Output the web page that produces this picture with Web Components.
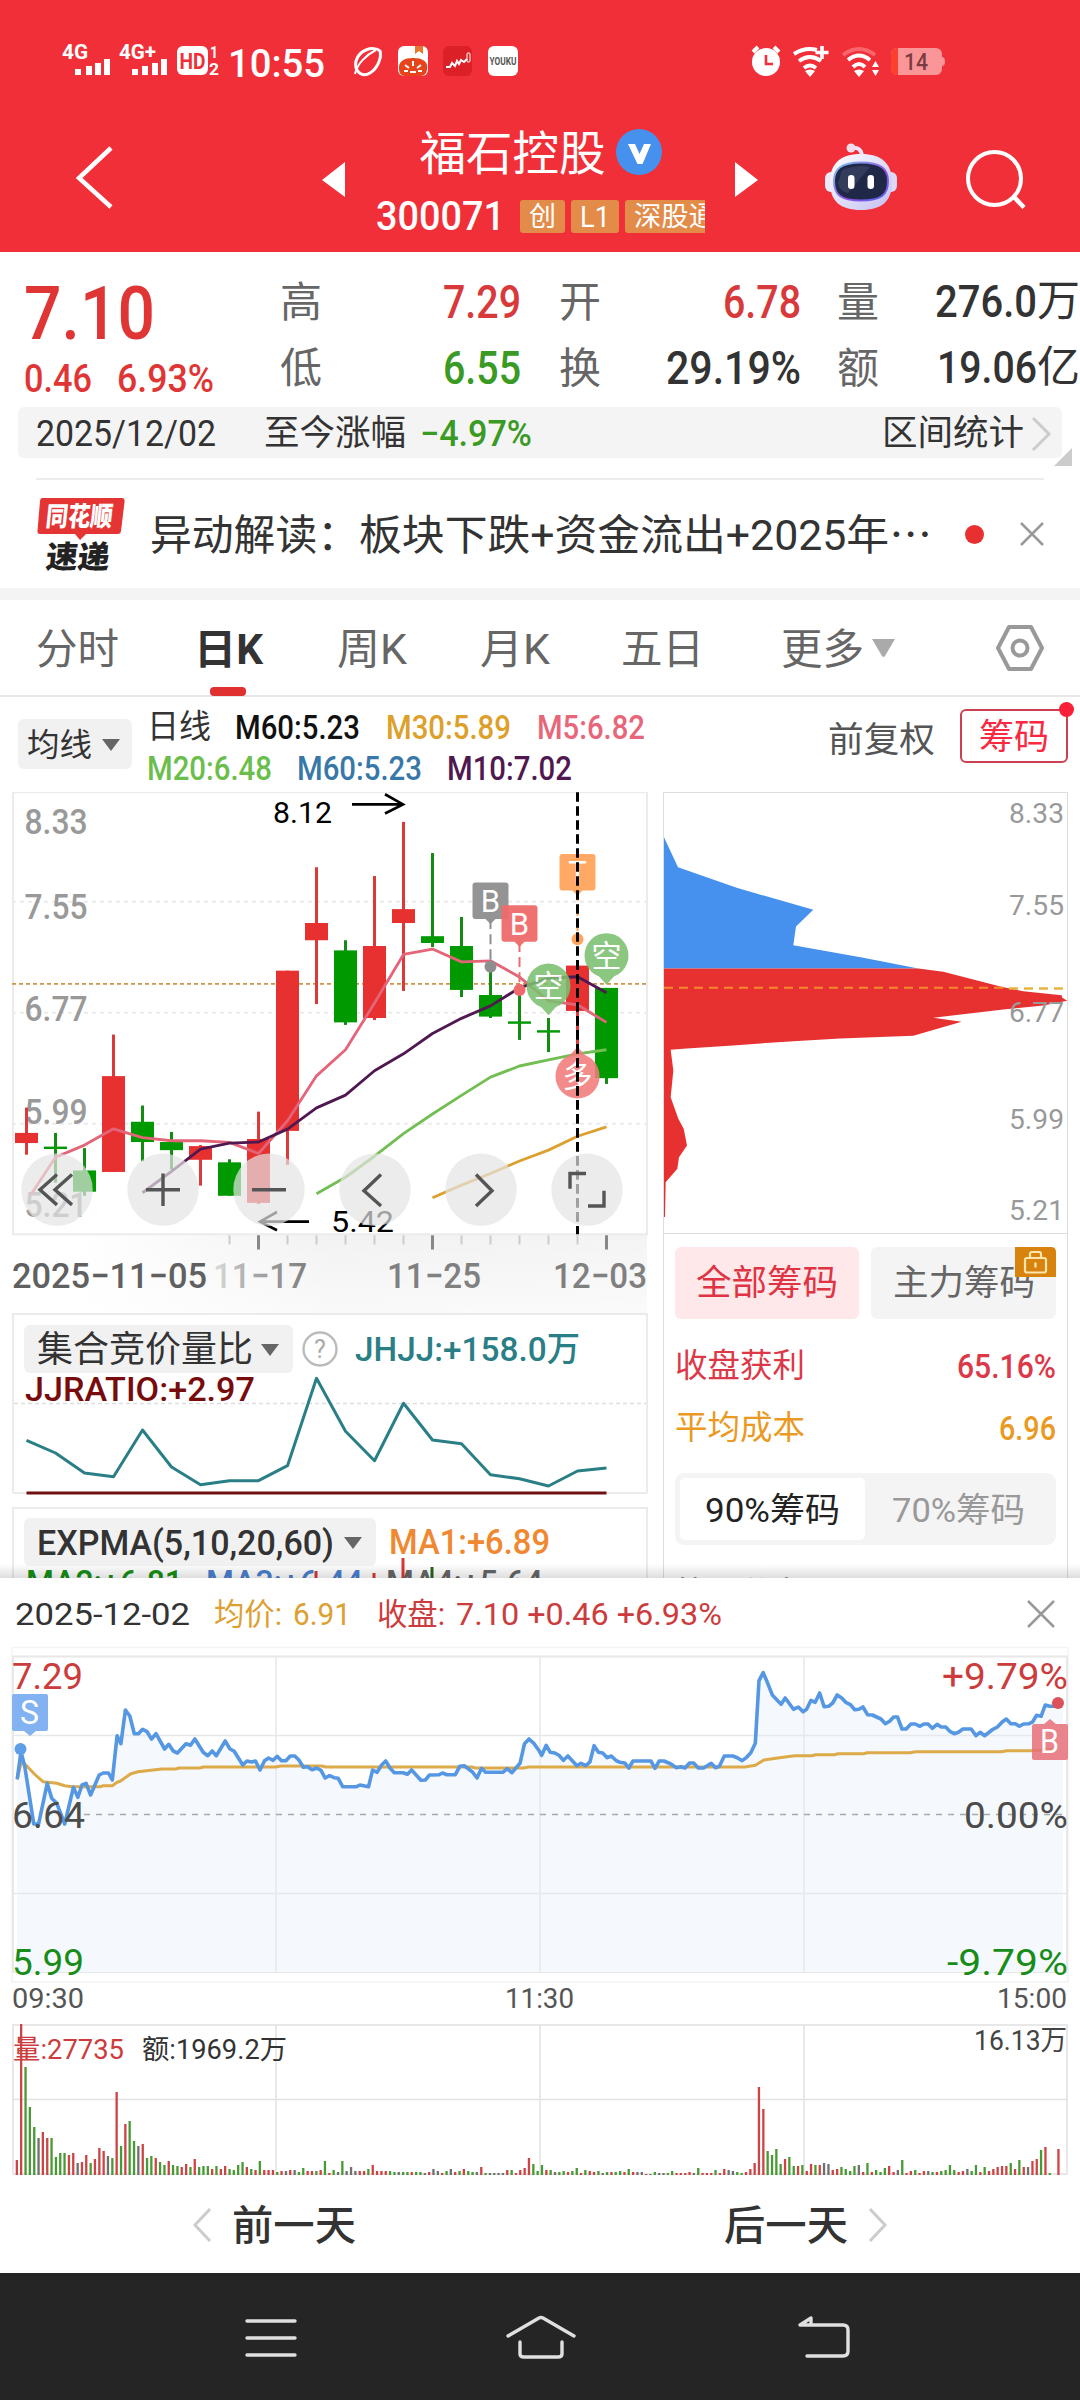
<!DOCTYPE html>
<html lang="zh-CN">
<head>
<meta charset="utf-8">
<title>福石控股 300071</title>
<style>
  body {
    margin: 0;
    width: 1080px;
    height: 2400px;
    overflow: hidden;
    background: #fff;
    color: #333;
    font-family: Roboto, "Noto Sans CJK SC", sans-serif;
  }
  stock-app { height: 2400px; }
</style>
</head>
<body>
<stock-app></stock-app>

<script>
// Registers an element whose shadow root is filled with fixed markup
function define(name, html) {
  const template = document.createElement('template');
  template.innerHTML = html;
  customElements.define(name, class extends HTMLElement {
    constructor() {
      super();
      this.attachShadow({ mode: 'open' });
      this.shadowRoot.appendChild(template.content.cloneNode(true));
    }
  });
}

// SVG label, stretched to width w
function label(text, x, y, size, w, fill, extra = '') {
  return `<text x="${x}" y="${y}" font-size="${size}" textLength="${w}" lengthAdjust="spacingAndGlyphs" fill="${fill}" ${extra}>${text}</text>`;
}

function polyline(points, color, width) {
  return `<polyline points="${points}" fill="none" stroke="${color}" stroke-width="${width}" stroke-linejoin="round"/>`;
}

/* ---------- page ---------- */
define('stock-app', `
<style>
  :host { display: flex; flex-direction: column; }
  header { background: #f02f38; height: 252px; }
  .view { height: 978px; overflow: hidden; position: relative; }
  .view::after {
    content: ''; position: absolute; left: 0; right: 0; bottom: 0; height: 14px;
    background: linear-gradient(rgba(0,0,0,0), rgba(0,0,0,.13));
  }
  .band { height: 12px; background: #f4f4f4; }
  .charts { display: grid; grid-template-columns: 663px 405px; align-items: start; }
</style>
<header><status-bar></status-bar><stock-nav></stock-nav></header>
<quote-panel></quote-panel>
<news-strip></news-strip>
<div class="band"></div>
<div class="view">
  <period-tabs></period-tabs>
  <ma-legend></ma-legend>
  <div class="charts">
    <div><kline-chart></kline-chart><auction-panel></auction-panel><expma-panel></expma-panel></div>
    <chip-panel></chip-panel>
  </div>
</div>
<day-sheet></day-sheet>
<system-nav></system-nav>
`);

/* ---------- header ---------- */
define('status-bar', `
<style>
  :host { display: flex; height: 122px; color: #fff; }
  svg { display: block; }
  text { font-weight: 700; }
</style>
<svg width="1080" height="122" fill="#fff">
  ${label('4G', 62, 58.5, 20.5, 26, '#fff')}
  <path d="M75 69h6v6h-6zM86 66h6v9h-6zM95 63h6v12h-6zM104 59h6v16h-6z"/>
  ${label('4G+', 119, 58.5, 20.5, 37, '#fff')}
  <path d="M132 69h6v6h-6zM142 66h6v9h-6zM152 63h6v12h-6zM161 59h6v16h-6z"/>
  <rect x="177" y="46" width="31" height="29" rx="6"/>
  ${label('HD', 179.5, 68.5, 22, 26, '#f02f38')}
  ${label('1', 210, 58, 17, 8, '#fff')}
  ${label('2', 209, 75, 16, 10, '#fff')}
  ${label('10:55', 228, 76.5, 38, 97, '#fff', 'style="font-weight:500"')}
  <g fill="none" stroke="#fff" stroke-width="3">
    <path d="M357 70C353 63 358 53 366 50C371 48 377 48 380 51C382 58 377 69 370 73C365 76 360 75 357 70Z"/>
    <path d="M355 74C357 64 366 55 376 50" stroke-width="2"/>
  </g>
  <rect x="398" y="46" width="30" height="30" rx="6"/>
  <path d="M415 46h8v8l-4-3-4 3z" fill="#e8762c"/>
  <path d="M399 70C398 61 404 58 413 58S429 61 427 70Q426 76 420 76H405Q400 76 399 70Z" fill="#e8441c"/>
  <path d="M405 65l4 3M413 61v5M421 65l-4 3M404 71h4M418 71h4M410 72h6" stroke="#fff" stroke-width="2" fill="none"/>
  <rect x="443" y="46" width="29" height="30" rx="6" fill="#dc2028"/>
  <path d="M446 67h4l2-4 3 3 2-5 2 3 2-4 3 2 3-3" stroke="#fff" stroke-width="2" fill="none"/>
  <rect x="467" y="53" width="3" height="9" rx="1" fill="none" stroke="#fff"/>
  <rect x="488" y="46" width="30" height="30" rx="6"/>
  ${label('YOUKU', 489.5, 64.5, 10, 27, '#555')}
  <circle cx="766" cy="62" r="14"/>
  <path d="M753 52l5-5M779 52l-5-5" stroke="#fff" stroke-width="4"/>
  <path d="M766 55v9h7" fill="none" stroke="#f02f38" stroke-width="2.6"/>
  <g fill="none" stroke="#fff" stroke-width="4">
    <path d="M794 54Q805 47 817 50M799 61Q810 53 821 61M804 68Q810 63 816 68"/>
    <path d="M822 46v13M815.500 52.500h13" stroke-width="3.600"/>
    <path d="M843 55Q859 43 875 55" stroke="#fa646c"/>
    <path d="M848 60Q859 51 870 60M853 67Q859 61 865 67"/>
  </g>
  <path d="M805 71q5-3 10 0l-5 6zM854 71q5-3 10 0l-5 6zM872 67l3.500-6 3.500 6zM872 70l3.500 6 3.500-6z"/>
  <rect x="891" y="48" width="51" height="27" rx="6" fill="#fa9698"/>
  <path d="M898 48h-1q-6 0-6 6v15q0 6 6 6h1z" fill="#fb4030"/>
  <path d="M942 57q3 0 3 4.500t-3 4.500z" fill="#fa9698"/>
  ${label('14', 904, 70, 23, 24, '#7a3c40', 'style="font-weight:500"')}
</svg>
`);

define('stock-nav', `
<style>
  :host { display: grid; grid-template-columns: 322px 23px 31px 329px 30px 345px; height: 130px; color: #fff; }
  svg { display: block; }
  .title { display: flex; flex-direction: column; align-items: center; }
  .name { display: flex; align-items: center; gap: 10px; height: 60px; }
  .name fit-text { margin-top: 4px; }
  .badge { width: 46px; height: 46px; }
  .code { display: flex; align-items: center; width: 329px; height: 34px; margin-top: 17px; overflow: hidden; }
  .tag { background: #e38b49; border-radius: 3px; height: 33px; margin-left: 6px; padding: 2px 9px 0; box-sizing: border-box; display: flex; align-items: center; flex: none; }
  .tag:nth-of-type(1) { margin-left: 15px; }
</style>
<svg width="322" height="130"><path d="M111 26L79 56L111 85" fill="none" stroke="#fff" stroke-width="4.500"/></svg>
<svg width="23" height="130"><path d="M0 58L23 40V75Z" fill="#fff"/></svg>
<span></span>
<div class="title">
  <div class="name">
    <fit-text w="186" size="46.500">福石控股</fit-text>
    <svg class="badge" viewBox="0 0 46 46"><circle cx="23" cy="23" r="23" fill="#4691ee"/><path d="M12 15h7l4.500 10L28 15h7l-8.500 20h-5z" fill="#fff"/></svg>
  </div>
  <div class="code">
    <fit-text w="129" size="40" weight="500" style="margin-top:2px">300071</fit-text>
    <div class="tag"><fit-text w="27" size="27">创</fit-text></div>
    <div class="tag"><fit-text w="30" size="29">L1</fit-text></div>
    <div class="tag"><fit-text w="82" size="27.500">深股通</fit-text></div>
  </div>
</div>
<span></span>
<svg width="345" height="130">
  <defs>
    <linearGradient id="head" x1="0" y1="0" x2="1" y2="1"><stop offset="0" stop-color="#fff"/><stop offset="1" stop-color="#c4bff2"/></linearGradient>
    <linearGradient id="rim" x1="0" y1="0" x2="1" y2="1"><stop offset="0" stop-color="#7cc8f0"/><stop offset=".6" stop-color="#9050e0"/><stop offset="1" stop-color="#5068f0"/></linearGradient>
  </defs>
  <path d="M0 40V75L23 58Z" fill="#fff"/>
  <g transform="translate(-735 -122)">
    <path d="M851 148q10-2 11 8" fill="none" stroke="#f0e4f8" stroke-width="4"/>
    <circle cx="851" cy="148" r="4.500" fill="#f4dcec"/>
    <rect x="825" y="172" width="14" height="20" rx="6" fill="#ece8fa"/>
    <rect x="883" y="172" width="14" height="20" rx="6" fill="#dcd8f6"/>
    <path d="M861 154C882 154 892 164 892 182C892 201 882 210 861 210S830 201 830 182C830 164 840 154 861 154Z" fill="url(#head)"/>
    <path d="M861 162.500C881 162.500 888 169 888 181C888 195 881 200.500 861 200.500S834 195 834 181C834 169 841 162.500 861 162.500Z" fill="#202848" stroke="url(#rim)" stroke-width="2"/>
    <path d="M842 170q16-6 28-3l-22 26q-9-2-10-10z" fill="#46506c" opacity=".5"/>
    <rect x="848" y="175" width="6.500" height="14" rx="3.200" fill="#fff"/>
    <rect x="867.500" y="175" width="6.500" height="14" rx="3.200" fill="#fff"/>
    <circle cx="994.500" cy="178.500" r="26.500" fill="none" stroke="#fff" stroke-width="4"/>
    <path d="M1014 197l10 10.500" stroke="#fff" stroke-width="4.500"/>
  </g>
</svg>
`);

/* ---------- quote ---------- */
define('quote-panel', `
<style>
  :host { display: flex; flex-direction: column; height: 228px; position: relative; }
  .top { display: grid; grid-template-columns: 280px 241px 280px 279px; height: 156px; color: #666; }
  .price { padding: 24px 0 0 24px; color: #e03535; }
  .sub { display: flex; gap: 25px; margin-top: 9px; }
  .col { display: flex; flex-direction: column; padding-top: 18px; gap: 1px; }
  .cell { display: flex; justify-content: space-between; align-items: center; height: 65px; }
  .cell > :last-child { position: relative; top: -1px; }
  .c2 { padding-left: 38px; } .c3 { padding-left: 36px; }
  .up { color: #d83a3c; } .down { color: #399a24; } .dark { color: #333; }
  .range { display: flex; align-items: center; margin-left: 18px; width: 1044px; height: 51px; box-sizing: border-box; padding: 2px 9px 0 18px; background: #f4f4f4; border-radius: 6px; color: #333; }
  .corner { position: absolute; left: 1054px; top: 196px; }
  hr { width: 1008px; margin: 20px 36px 0; border: 0; border-top: 2px solid #ececec; }
</style>
<div class="top">
  <div class="price">
    <fit-text w="131" size="75" weight="500">7.10</fit-text>
    <div class="sub"><fit-text w="68" size="39" weight="500">0.46</fit-text><fit-text w="97" size="39" weight="500">6.93%</fit-text></div>
  </div>
  <div class="col">
    <div class="cell"><fit-text w="42" size="42">高</fit-text><fit-text class="up" w="78" size="46" weight="500">7.29</fit-text></div>
    <div class="cell"><fit-text w="42" size="42">低</fit-text><fit-text class="down" w="78" size="46" weight="500">6.55</fit-text></div>
  </div>
  <div class="col c2">
    <div class="cell"><fit-text w="42" size="42">开</fit-text><fit-text class="up" w="78" size="46" weight="500">6.78</fit-text></div>
    <div class="cell"><fit-text w="42" size="42">换</fit-text><fit-text class="dark" w="135" size="46" weight="500">29.19%</fit-text></div>
  </div>
  <div class="col c3">
    <div class="cell"><fit-text w="42" size="42">量</fit-text><span class="dark"><fit-text w="102" size="45" weight="500">276.0</fit-text><fit-text w="43" size="43">万</fit-text></span></div>
    <div class="cell"><fit-text w="42" size="42">额</fit-text><span class="dark"><fit-text w="100" size="45" weight="500">19.06</fit-text><fit-text w="43" size="43">亿</fit-text></span></div>
  </div>
</div>
<div class="range">
  <fit-text w="180" size="37">2025/12/02</fit-text>
  <fit-text w="142" size="35.500" style="margin-left:48px">至今涨幅</fit-text>
  <fit-text class="down" w="112" size="36" weight="500" style="margin-left:14px">−4.97%</fit-text>
  <fit-text w="142" size="35.500" style="margin-left:auto">区间统计</fit-text>
  <svg width="22" height="36" style="margin-left:7px"><path d="M2 2L18 18L2 34" fill="none" stroke="#ccc" stroke-width="3"/></svg>
</div>
<svg class="corner" width="18" height="18"><path d="M18 0V18H0Z" fill="#ccc"/></svg>
<hr>
`);

define('news-strip', `
<style>
  :host { display: flex; align-items: center; height: 108px; box-sizing: border-box; padding-left: 36px; }
  .logo { display: flex; flex-direction: column; width: 90px; height: 75px; margin-right: 24px; position: relative; }
  .logo svg { position: absolute; left: 0; top: 0; }
  .logo fit-text { position: relative; transform: skewX(-6deg); }
  .a { color: #fff; margin: 7px 0 0 10px; }
  .b { color: #222; margin: 11px 0 0 10px; }
  .t { margin-top: 4px; }
  .dot { width: 19px; height: 19px; border-radius: 50%; background: #e83030; margin: 0 44px 0 33px; }
</style>
<div class="logo">
  <svg width="90" height="45"><path d="M6 1H86Q89 1 88.500 5L85 34Q84.500 37 82 37H50L44 43L39 37H4Q1 37 1.500 34L4 4Q4.500 1 6 1Z" fill="#e53434"/></svg>
  <fit-text class="a" w="69" size="27" weight="900">同花顺</fit-text>
  <fit-text class="b" w="67" size="31" weight="900">速递</fit-text>
</div>
<fit-text class="t" w="209" size="42">异动解读：</fit-text>
<fit-text class="t" w="573" size="42">板块下跌+资金流出+2025年⋯</fit-text>
<div class="dot" style="margin-left:33px;margin-right:35px"></div>
<svg width="26" height="26"><path d="M2 2L24 24M24 2L2 24" stroke="#999" stroke-width="2.500"/></svg>
`);

/* ---------- tabs ---------- */
define('period-tabs', `
<style>
  :host { display: flex; height: 97px; border-bottom: 2px solid #e8e8e8; color: #666; box-sizing: border-box; padding-left: 36px; }
  div { display: flex; align-items: center; height: 96px; position: relative; margin-right: 59px; }
  fit-text { margin-top: 4px; }
  .on { color: #333; }
  .on::after { content: ''; position: absolute; left: 16px; bottom: 0; width: 36px; height: 9px; border-radius: 4px; background: #e03030; }
</style>
<div style="margin-right:75px"><fit-text w="83" size="41.500">分时</fit-text></div>
<div class="on" style="margin-right:74px"><fit-text w="69" size="42" weight="700">日K</fit-text></div>
<div style="margin-right:73px"><fit-text w="70" size="42">周K</fit-text></div>
<div style="margin-right:71px"><fit-text w="70" size="42">月K</fit-text></div>
<div style="margin-right:77px"><fit-text w="83" size="41.500">五日</fit-text></div>
<div style="margin-right:8px"><fit-text w="83" size="41.500">更多</fit-text></div>
<div style="margin-right:100px"><svg width="23" height="20"><path d="M0 1H23L13 18Q11.500 20 10 18Z" fill="#aaa"/></svg></div>
<div><svg width="50" height="48" fill="none" stroke="#999" stroke-width="4"><path d="M14 3H36L47 24L36 45H14L3 24Z" stroke-linejoin="round"/><circle cx="25" cy="24" r="7.500"/></svg></div>
`);

define('ma-legend', `
<style>
  :host { display: flex; align-items: flex-start; height: 95px; padding-left: 18px; }
  .pick { display: flex; align-items: center; gap: 10px; width: 114px; height: 50px; margin-top: 22px; padding: 2px 0 0 9px; box-sizing: border-box; background: #f1f1f1; border-radius: 6px; }
  .rows { width: 664px; margin: 10px 0 0 15px; }
  .row { display: flex; align-items: center; gap: 26px; height: 41px; }
  .adj { margin: 27px 0 0 17px; color: #555; display: flex; height: 34px; align-items: center; }
  .chip { position: relative; display: flex; align-items: center; justify-content: center; width: 108px; height: 54px; box-sizing: border-box; padding-top: 2px; border: 2px solid #cc4050; border-radius: 6px; color: #fa2840; margin: 12px 0 0 25px; }
  .chip i { position: absolute; right: -8px; top: -9px; width: 15px; height: 15px; border-radius: 50%; background: #fa2038; }
</style>
<div class="pick"><fit-text w="65" size="32">均线</fit-text><svg width="18" height="12"><path d="M0 0H18L9 12Z" fill="#666"/></svg></div>
<div class="rows">
  <div class="row">
    <fit-text w="64" size="32.500" style="margin-right:-2px">日线</fit-text>
    <fit-text w="125" size="33" weight="500" style="color:#111">M60:5.23</fit-text>
    <fit-text w="125" size="33" weight="500" style="color:#dda02a">M30:5.89</fit-text>
    <fit-text w="108" size="33" weight="500" style="color:#e8667a">M5:6.82</fit-text>
  </div>
  <div class="row" style="gap:25px">
    <fit-text w="125" size="33" weight="500" style="color:#6cbe4c">M20:6.48</fit-text>
    <fit-text w="125" size="33" weight="500" style="color:#3878a8">M60:5.23</fit-text>
    <fit-text w="125" size="33" weight="500" style="color:#501850">M10:7.02</fit-text>
  </div>
</div>
<div class="adj"><fit-text w="107" size="35.500">前复权</fit-text></div>
<div class="chip"><fit-text w="70" size="35">筹码</fit-text><i></i></div>
`);

/* ---------- candlestick chart ---------- */
// [colour, high, body top, body bottom, low]
const candles = [
  ['r',1103,1128,1138,1149.5], ['g',1128,1141.5,1143.5,1177], ['g',1143,1165,1186,1190],
  ['r',1031,1072,1166.5,1166.5], ['g',1101,1117,1137,1156], ['g',1127,1137,1145,1164],
  ['r',1140,1141,1154.5,1180], ['g',1154,1157,1190,1190], ['r',1107,1134,1197,1198],
  ['r',968,968,1126,1159.5], ['r',866,921,938,1001], ['g',938,948,1019,1021.5],
  ['r',874.7,943.7,1014.7,1016.7], ['r',821.3,907.3,921,988], ['g',852,934,940.7,944.7],
  ['g',915,943.7,987,994], ['g',964.7,992,1013.3,1014.7], ['g',987,1018,1020,1036.3],
  ['g',1014.7,1026.7,1028.3,1048.3], ['r',963,963,1007.7,1044], ['g',985,985,1074,1079.7]
];
const cx = i => 26.5 + 29 * i;
const series = (start, ys) => ys.map((y, i) => `${cx(start + i)},${y}`).join(' ');

class KlineChart extends HTMLElement {
  constructor() {
    super();
    this.attachShadow({ mode: 'open' });
    this.shadowRoot.innerHTML = `
<style>
  :host { display: block; height: 521px; }
  svg { display: block; }
</style>
<svg width="663" height="521" viewBox="0 791.8 663 513.8" preserveAspectRatio="none">${this.grid()}${this.bars()}${this.lines()}${this.marks()}${this.buttons()}</svg>`;
  }

  grid() {
    let s = `<defs>
      <linearGradient id="ax" x1="0" x2="1" y1="0" y2="0"><stop offset=".1" stop-color="#fff"/><stop offset=".5" stop-color="#f2f2f2"/><stop offset="1" stop-color="#f4f4f4"/></linearGradient>
      <linearGradient id="fade" x1="0" x2="0" y1="0" y2="1"><stop offset="0" stop-color="#fff" stop-opacity="0"/><stop offset="1" stop-color="#fff" stop-opacity=".65"/></linearGradient>
      <linearGradient id="dim"><stop offset="0" stop-color="#ddd"/><stop offset=".4" stop-color="#aaa"/><stop offset="1" stop-color="#808080"/></linearGradient>
    </defs>
    <rect x="13" y="1228" width="634" height="85" fill="url(#ax)"/><rect x="13" y="1228" width="634" height="85" fill="url(#fade)"/>
    <rect x="13" y="792" width="634" height="436" fill="#fff" stroke="#ebebeb" stroke-width="2"/>`;
    for (const y of [900, 1009.5, 1119]) s += `<path d="M12 ${y}H647" stroke="#ebebeb" stroke-width="2" stroke-dasharray="4 4"/>`;
    s += '<path d="M12 981H647" stroke="#d09448" stroke-width="1.600" stroke-dasharray="4 3"/>';
    [['8.33', 833], ['7.55', 917], ['6.77', 1018], ['5.99', 1119], ['5.21', 1211]].forEach(([t, y]) => {
      s += label(t, 24.5, y, 35, 63, '#999', 'font-weight="500"');
    });
    for (let i = 7; i < 21; i++) s += `<path d="M${cx(i)} 1229v9" stroke="#ccc" stroke-width="2"/>`;
    for (const i of [8, 14, 20]) s += `<path d="M${cx(i)} 1229v14" stroke="#888" stroke-width="3"/>`;
    s += label('2025−11−05', 12, 1281, 35, 195, '#606060', 'font-weight="500"');
    s += label('11−17', 213, 1281, 35, 94, 'url(#dim)', 'font-weight="500"');
    s += label('11−25', 387, 1281, 35, 94, '#808080', 'font-weight="500"');
    s += label('12−03', 553, 1281, 35, 94, '#808080', 'font-weight="500"');
    return s;
  }

  bars() {
    return candles.map(([c, hi, top, bottom, lo], i) => {
      const fill = c === 'r' ? '#e73030' : '#009a00';
      const wick = c === 'r' ? '#dc3a3a' : '#148c14';
      return `<path d="M${cx(i)} ${hi}V${lo}" stroke="${wick}" stroke-width="3"/>
        <rect x="${cx(i) - 11.5}" y="${top}" width="23" height="${Math.max(bottom - top, 2.4)}" fill="${fill}"/>`;
    }).join('');
  }

  lines() {
    const ma5 = '31.5,1188 ' + series(1, [1152,1140,1124,1132.7,1135.7,1135.7,1137.3,1148.3,1116,1071.7,1046,1000,952,946.7,959.3,958.3,974.3,997.7,1001.7,1019]);
    const ma10 = series(4, [1187,1166,1144,1138,1137,1124.3,1103.3,1090.7,1066.7,1050,1030,1015,1002.7,985,975.3,974,989.7]);
    const ma20 = series(10, [1188,1171.7,1151,1128.7,1109.3,1091,1073,1062,1056,1050,1046]);
    const ma30 = series(14, [1192,1179.5,1168,1155.7,1145,1131.3,1122]);
    return polyline(ma5, '#e46478', 2.8) + polyline(ma10, '#501850', 2.8) + polyline(ma20, '#72be52', 2.8) + polyline(ma30, '#dca030', 2.8);
  }

  // square flag with a pointer, hanging above a price dot
  flag(text, x, y, color, dotY) {
    return `<path d="M${x} ${y + 36}V${dotY}" stroke="${color}" stroke-width="2" stroke-dasharray="10 5"/>
      <circle cx="${x}" cy="${dotY}" r="6" fill="${color}"/>
      <path d="M${x - 15} ${y}h30q3 0 3 3v30q0 3-3 3h-10l-5 5l-5-5h-10q-3 0-3-3v-30q0-3 3-3z" fill="${color}" opacity=".95"/>
      <text x="${x}" y="${y + 29}" font-size="31" text-anchor="middle" fill="#fff">${text}</text>`;
  }

  pin(text, x, y, color, tip) {
    return `<g opacity=".88"><circle cx="${x}" cy="${y}" r="22" fill="${color}"/>
      <path d="M${x - 9} ${y + 19 * tip}L${x} ${y + 29 * tip}L${x + 9} ${y + 19 * tip}Z" fill="${color}"/>
      <text x="${x}" y="${y + 11}" font-size="30" text-anchor="middle" fill="#fff">${text}</text></g>`;
  }

  marks() {
    return this.flag('B', 490.5, 881, '#8e8e8e', 964)
      + this.flag('B', 519.5, 903.5, '#ee6a6c', 987)
      + this.flag('T', 577.5, 853, '#ffa45c', 937)
      + this.pin('空', 548.5, 983, '#7cc070', 1)
      + this.pin('空', 606.5, 953, '#7cc070', 1)
      + this.pin('多', 577.5, 1072, '#f27c7c', -1)
      + `<path d="M577.5 792V1228" stroke="#000" stroke-width="3" stroke-dasharray="9.500 4.300"/>`
      + label('8.12', 273, 822, 30, 59, '#000')
      + label('5.42', 331, 1226, 30, 63, '#000')
      + `<g fill="none" stroke="#000" stroke-width="2.600"><path d="M352 804H403M385 794L403 804L385 813"/><path d="M309 1215.500H260M277 1206L260 1215.500L277 1224"/></g>`;
  }

  buttons() {
    const icons = [
      [57, 'M0-15L-17 0L0 15M15-15L-2 0L15 15'],
      [163, 'M-17 0H17M0-16V16'],
      [269, 'M-17 0H17'],
      [375, 'M6-15L-11 1L6 16'],
      [481, 'M-5-15L11 1L-5 16'],
      [587, 'M-17-1V-16H-1M17 1V16H1']
    ];
    return icons.map(([x, d]) => `<g transform="translate(${x} 1184)"><circle r="35.700" fill="#e4e4e4" opacity=".7"/><path d="${d}" fill="none" stroke="#555" stroke-width="3.400"/></g>`).join('');
  }
}
customElements.define('kline-chart', KlineChart);

/* ---------- indicators ---------- */
const selectStyle = `
  .head { display: flex; align-items: center; position: relative; }
  .pick { display: flex; align-items: center; justify-content: space-between; height: 48px; padding: 2px 14px 0 13px; box-sizing: border-box; background: #f1f1f1; border-radius: 6px; }
`;

define('auction-panel', `
<style>
  :host { display: block; position: relative; width: 636px; height: 180px; margin: 0 0 14px 12px; border: 2px solid #ebebeb; border-width: 2px 2px 0; box-sizing: border-box; background: #fff; }
  ${selectStyle}
  .head { margin: 10px 0 0 10px; }
  .pick { width: 269px; }
  .chart { position: absolute; left: -14px; top: -2px; }
  .q { margin: 0 17px 0 9px; }
  .ratio { margin: -1px 0 0 11px; display: block; color: #780c0c; position: relative; }
</style>
<svg class="chart" width="663" height="186" viewBox="0 1313 663 186">
  <path d="M14 1403.500H646" stroke="#ddd" stroke-width="1.500" stroke-dasharray="4 3"/>
  <path d="M13 1493H647" stroke="#ebebeb" stroke-width="2"/>
  ${polyline(series(0, [1440.3,1453,1473,1476.7,1430,1467,1484.7,1480.7,1480.7,1465.7,1378.3,1431.3,1460.7,1403.3,1440,1443.7,1474.7,1478.7,1486,1471,1468]), '#2a7f86', 3)}
  <path d="M26.500 1493H606.500" stroke="#701010" stroke-width="3"/>
</svg>
<div class="head">
  <div class="pick"><fit-text w="216" size="36">集合竞价量比</fit-text><svg width="18" height="12"><path d="M0 0H18L9 12Z" fill="#666"/></svg></div>
  <svg class="q" width="36" height="36"><circle cx="18" cy="18" r="16.500" fill="none" stroke="#bbb" stroke-width="2.400"/><text x="18" y="27" font-size="25" text-anchor="middle" fill="#aaa">?</text></svg>
  <fit-text w="225" size="34" weight="500" style="color:#2a7f86">JHJJ:+158.0万</fit-text>
</div>
<fit-text class="ratio" w="230" size="34" weight="500">JJRATIO:+2.97</fit-text>
`);

define('expma-panel', `
<style>
  :host { display: block; width: 636px; height: 180px; margin-left: 12px; border: 2px solid #ebebeb; box-sizing: border-box; }
  ${selectStyle}
  .head { margin: 9px 0 0 10px; gap: 13px; }
  .pick { width: 352px; }
  .row { display: flex; gap: 23px; margin: -1px 0 0 12px; position: relative; }
  .row svg { position: absolute; left: 0; top: -7px; }
</style>
<div class="head">
  <div class="pick"><fit-text w="297" size="35" weight="500">EXPMA(5,10,20,60)</fit-text><svg width="18" height="12"><path d="M0 0H18L9 12Z" fill="#666"/></svg></div>
  <fit-text w="161" size="35" weight="500" style="color:#f08830">MA1:+6.89</fit-text>
</div>
<div class="row">
  <fit-text w="157" size="34" weight="500" style="color:#159015">MA2:+6.81</fit-text>
  <fit-text w="157" size="34" weight="500" style="color:#4a80d0">MA3:+6.44</fit-text>
  <fit-text w="157" size="34" weight="500" style="color:#666">MA4:+5.64</fit-text>
  <svg width="600" height="30" stroke-width="3"><path d="M290 13v14M348 15v12M377 0v27" stroke="#d83838"/><path d="M406 9v18" stroke="#2c6414"/></svg>
</div>
`);

/* ---------- chip distribution ---------- */
define('chip-panel', `
<style>
  :host { display: block; height: 900px; border: 1px solid #ddd; box-sizing: border-box; }
  .dist { display: block; margin: -1px 0 0 -1px; }
  .body { padding: 12px 11px; }
  .pair { display: grid; grid-template-columns: 184px 185px; gap: 12px; }
  .btn { display: flex; align-items: center; justify-content: center; height: 72px; padding-top: 2px; box-sizing: border-box; border-radius: 6px; background: #f4f4f4; color: #666; position: relative; }
  .on { background: #fee8ea; color: #de3444; }
  .lock { position: absolute; right: 0; top: 0; }
  .line { display: flex; align-items: center; justify-content: space-between; height: 62px; }
  .seg { display: grid; grid-template-columns: 185px 1fr; padding: 5px; height: 72px; box-sizing: border-box; background: #f4f4f4; border-radius: 9px; }
  .seg div { display: flex; align-items: center; justify-content: center; padding-top: 2px; border-radius: 5px; color: #999; }
  .seg .act { background: #fff; color: #222; }
</style>
<svg class="dist" width="405" height="443" viewBox="663 791.500 405 443">
  <g transform="translate(650 780) scale(.3333)">
    <path d="M42 170L84 260L260 322L490 388L438 438L430 494L640 532L805 564H42Z" fill="#4691ee"/>
    <path d="M42 564H805L880 574L1060 620L1120 632L1235 644L1237 652L1252 661L1180 675L1060 687L850 712L935 724L790 766L570 774L430 782L260 794L110 804L62 808L70 870L62 950L85 1015L101 1045L111 1095L87 1130L82 1165L47 1205L45 1310H42Z" fill="#e73030"/>
    <path d="M42 622H1075" stroke="#f48a2c" stroke-width="6" stroke-dasharray="27 18"/>
    <path d="M1077 624H1240" stroke="#e8b440" stroke-width="7" stroke-dasharray="27 18"/>
  </g>
  ${[['8.33', 822.5], ['7.55', 914], ['6.77', 1021], ['5.99', 1128], ['5.21', 1219]].map(([t, y]) => label(t, 1009, y, 28.5, 55, '#999')).join('')}
  <path d="M663 1233H1068" stroke="#ddd" stroke-width="1"/>
</svg>
<div class="body">
  <div class="pair">
    <div class="btn on"><fit-text w="142" size="35.500">全部筹码</fit-text></div>
    <div class="btn"><fit-text w="142" size="35.500">主力筹码</fit-text>
      <svg class="lock" width="41" height="30"><path d="M0 0H36Q41 0 41 5V30H0Z" fill="#d9830f"/><g fill="none" stroke="#ffe6b0" stroke-width="2.200"><rect x="10" y="11" width="21" height="14.500" rx="2"/><path d="M15 11V7q0-2 2-2h7q2 0 2 2v4M20.500 15.500v5"/></g></svg>
    </div>
  </div>
  <div class="line" style="color:#dc3848;margin-top:16px"><fit-text w="130" size="32.500">收盘获利</fit-text><fit-text w="99" size="33" weight="500">65.16%</fit-text></div>
  <div class="line" style="color:#ea9a22;margin-bottom:14px"><fit-text w="130" size="32.500">平均成本</fit-text><fit-text w="57" size="33" weight="500">6.96</fit-text></div>
  <div class="seg"><div class="act"><fit-text w="135" size="34">90%筹码</fit-text></div><div><fit-text w="133" size="34">70%筹码</fit-text></div></div>
  <div class="line" style="color:#888;margin-top:18px"><fit-text w="130" size="32.500">筹码分布</fit-text></div>
</div>
`);

/* ---------- intraday sheet ---------- */
// half-day traces, about 3 units per pixel, origin at (0, 1570)
const morning = '50,628 61,545 72,590 98,762 112,762 137,640 150,685 165,700 188,762 213,652 226,682 238,645 250,640 263,675 288,615 300,609 315,609 326,630 340,497 351,521 364,420 377,438 390,491 402,491 414,478 427,485 440,507 453,491 478,537 490,523 503,543 515,549 540,521 553,526 566,507 590,547 603,557 616,543 628,557 654,513 667,536 680,544 705,585 717,573 730,576 742,573 755,600 768,572 780,564 793,571 805,559 817,572 830,572 843,558 856,558 868,570 881,592 893,590 906,599 920,594 932,601 944,624 957,617 970,623 982,625 995,650 1035,650 1045,645 1070,650 1082,600 1095,607 1108,585 1120,573 1133,595 1145,608 1170,608 1183,613 1195,600 1222,631 1235,630 1247,615 1275,614 1285,609 1298,614 1322,614 1335,589 1348,587 1372,606 1385,624 1398,595 1410,607 1460,607 1473,596 1486,608 1510,580 1523,521 1536,507 1550,520 1566,543';
const afternoon = '5,556 18,526 30,547 43,549 55,556 68,571 81,558 107,587 119,580 133,587 145,576 157,527 170,547 182,549 195,563 207,558 220,571 232,577 246,579 258,594 270,573 322,573 334,595 346,573 360,573 380,582 396,593 409,590 421,594 434,579 446,579 460,594 475,594 497,580 510,593 521,589 535,558 560,558 573,563 587,572 600,562 612,548 625,520 636,332 648,308 660,337 675,376 700,403 712,384 736,418 750,411 764,425 774,418 787,391 799,397 812,369 825,410 838,409 850,399 863,375 876,384 888,397 900,403 914,419 926,418 938,411 951,434 965,435 990,447 1003,461 1015,454 1027,441 1038,441 1051,477 1063,477 1077,462 1090,462 1102,469 1115,462 1127,462 1139,475 1153,463 1165,471 1178,471 1190,484 1203,491 1215,487 1228,477 1252,477 1266,497 1278,487 1291,497 1315,478 1328,471 1342,456 1354,447 1367,461 1380,461 1392,469 1404,462 1420,461 1430,456 1442,436 1455,439 1467,405 1480,409 1495,409 1503,399';
const averageAm = '50,628 62,575 75,585 100,612 125,635 165,640 188,647 210,650 290,650 300,647 326,647 340,637 350,633 380,611 400,605 470,597 510,597 520,594 580,594 590,591 800,591 815,588 935,588 945,591 1370,591 1380,594 1520,594 1535,591';
const averagePm = '0,591 595,591 625,586 650,570 690,564 740,557 790,557 800,554 855,554 865,551 940,551 950,548 1075,548 1090,545 1340,545 1355,542 1430,542 1500,538';
const trace = (raw, left) => raw.split(' ').map(p => {
  const [x, y] = p.split(',').map(Number);
  return `${(left + x * 0.3444).toFixed(1)},${(1570 + y / 3).toFixed(1)}`;
}).join(' ');

// volume bars: colour letter followed by the bar height
const volumes = ('r15 r151 g108 g68 g48 k37 r43 r37 g37 g18 g22 g22 r20 r22 k12 r13 r20 g12 r16 r27 r24 k19 g17 r83 g29 r51 g54 g34 k29 r31 g17 g19 r17 g13 g10 r14 g10 g9 r8 r11 g8 r16 g8 g9 g9 r6 g9 r6 r9 g6 g5 g10 g13 r8 g6 r5 g14 r5 r5 r5 '
  + 'g3 r4 k4 r5 k5 g3 g7 r4 r4 g4 r5 g14 r2 g5 k3 g14 k4 k8 k4 r4 r4 g6 r10 r4 r4 r4 g4 g3 k3 g3 g3 r3 g3 g3 k2 r3 k6 k4 r2 g4 k6 r3 g4 r6 g4 g3 k3 r8 g2 k2 k2 k2 k2 r5 g5 r2 r5 r7 r17 g11 '
  + 'g4 g10 r5 g5 k3 g3 g4 r3 g4 g7 r2 g5 r4 r3 g4 k2 g3 r3 g3 g4 r3 g6 r3 k3 k3 r1 k1 g3 k2 k2 g2 g4 r2 r2 r2 r3 k2 g7 r2 r2 r2 g5 r2 r6 k5 k4 g3 g2 r3 r6 r12 r88 r66 g24 g20 g26 g11 r16 g18 g9 '
  + 'r9 g10 r4 r11 g10 r10 k12 k11 r5 r6 g8 g6 g4 g9 k10 r3 g12 r3 g5 g3 g7 r9 r3 k5 g15 r2 r4 g5 r2 r4 k4 g3 r3 g4 g5 g10 g5 r3 r4 k6 g4 g10 r3 g8 r4 r6 r8 r9 r9 g12 r6 g15 r8 k8 r14 r16 g25 r28 g2 k0 r26').split(' ');

class IntradayChart extends HTMLElement {
  constructor() {
    super();
    this.attachShadow({ mode: 'open' });
    this.shadowRoot.innerHTML = `
<style>
  :host { display: block; height: 531px; }
  svg { display: block; }
</style>
<svg width="1080" height="531" viewBox="0 1645 1080 531">${this.price()}${this.volume()}</svg>`;
  }

  price() {
    const line = trace(morning, 0) + ' ' + trace(afternoon, 540);
    const grid = color => `<path d="M276 1656V1972M540 1656V1972M804 1656V1972M13 1735.500H1067M13 1893.500H1067" stroke="${color}" stroke-width="1.500"/>`;
    return `
      <rect x="12" y="1647.500" width="1056" height="334.500" fill="none" stroke="#f3f3f3" stroke-width="1.500"/>
      <rect x="13" y="1656.500" width="1054" height="315.500" fill="none" stroke="#e8e8e8" stroke-width="2"/>
      <polygon points="${line} 1063,1703 1063,1972 17,1972" fill="#f5f9fe"/>
      ${grid('#e6e8ea')}
      <path d="M84 1822.500H1067" transform="translate(0 -8)" stroke="#a6aaae" stroke-width="1.500" stroke-dasharray="6 6"/>
      ${polyline(trace(averageAm, 0) + ' ' + trace(averagePm, 540), '#dcaa48', 3)}
      ${polyline(line, '#5597e2', 3.6)}
      ${label('7.29', 12, 1689, 36, 71, '#cc3c3c')}
      ${label('6.64', 12, 1827.500, 36, 73, '#4c4c4c')}
      ${label('5.99', 12, 1975, 36, 72, '#188c18')}
      ${label('+9.79%', 942, 1689, 36, 126, '#cc3c3c')}
      ${label('0.00%', 964, 1827.500, 36, 104, '#4c4c4c')}
      ${label('-9.79%', 947, 1975, 36, 121, '#188c18')}
      <circle cx="20.500" cy="1749" r="6" fill="#5f9ee8"/>
      <path d="M14 1694H46q2 0 2 2V1729q0 2-2 2H36l-6 5l-6-5H14q-2 0-2-2V1696q0-2 2-2Z" fill="#82b2f2"/>
      ${label('S', 20, 1724, 34, 19, '#fff')}
      <circle cx="1058" cy="1703" r="6" fill="#dc5258"/>
      <path d="M1034 1724H1044l6-5l6 5H1066q2 0 2 2V1758q0 2-2 2H1034q-2 0-2-2V1726q0-2 2-2Z" fill="#e87078" opacity=".85"/>
      ${label('B', 1040, 1753, 33, 19, '#fff')}
      ${label('09:30', 12, 2008, 28.5, 72, '#555')}
      ${label('11:30', 505, 2008, 28.5, 69, '#555')}
      ${label('15:00', 997, 2008, 28.5, 70, '#555')}`;
  }

  volume() {
    const colors = { r: '#cc4444', g: '#489a34', k: '#707070' };
    const bars = volumes.map((v, i) => {
      const h = +v.slice(1);
      return `<rect x="${(15.7 + i * 4.34).toFixed(1)}" y="${2175 - h}" width="2.3" height="${h}" fill="${colors[v[0]]}"/>`;
    }).join('');
    return `
      <rect x="13" y="2025" width="1054" height="149" fill="none" stroke="#e8e8e8" stroke-width="2"/>
      <path d="M13 2099.500H1067M276 2025V2175M540 2025V2175M804 2025V2175" stroke="#e2e2e2" stroke-width="1.500"/>
      ${label('量:27735', 13, 2058.5, 27, 111, '#cc3c3c')}
      ${label('额:1969.2万', 142, 2058.5, 27, 145, '#333')}
      ${label('16.13万', 974, 2050, 28, 93, '#444')}
      ${bars}`;
  }
}
customElements.define('intraday-chart', IntradayChart);

define('day-sheet', `
<style>
  :host { display: flex; flex-direction: column; height: 695px; background: #fff; }
  .head { display: flex; align-items: center; height: 67px; padding: 4px 25px 0 15px; box-sizing: border-box; flex: none; }
  .head fit-text { margin-top: 2px; }
  .avg { color: #dca030; } .close { color: #cc3c3c; }
  .pager { display: flex; justify-content: space-between; align-items: center; height: 99px; padding: 0 192px; }
  .pager div { display: flex; align-items: center; gap: 20px; }
  .pager fit-text { margin-top: 4px; }
</style>
<div class="head">
  <fit-text w="175" size="31">2025-12-02</fit-text>
  <fit-text class="avg" w="68" size="31" style="margin-left:24px">均价:</fit-text>
  <fit-text class="avg" w="58" size="31" style="margin-left:11px">6.91</fit-text>
  <fit-text class="close" w="68" size="31" style="margin-left:26px">收盘:</fit-text>
  <fit-text class="close" w="266" size="31" style="margin-left:11px">7.10 +0.46 +6.93%</fit-text>
  <svg width="28" height="28" style="margin-left:auto"><path d="M1 1L27 27M27 1L1 27" stroke="#999" stroke-width="2.500"/></svg>
</div>
<intraday-chart></intraday-chart>
<div class="pager">
  <div><svg width="20" height="36"><path d="M18 2L3 18L18 34" fill="none" stroke="#ccc" stroke-width="3"/></svg><fit-text w="124" size="41" weight="500">前一天</fit-text></div>
  <div><fit-text w="124" size="41" weight="500">后一天</fit-text><svg width="20" height="36"><path d="M2 2L17 18L2 34" fill="none" stroke="#ccc" stroke-width="3"/></svg></div>
</div>
`);

define('system-nav', `
<style>
  :host { display: flex; align-items: center; justify-content: space-between; height: 127px; box-sizing: border-box; background: #252525; padding: 2px 229px 0 245px; }
  svg { fill: none; stroke: #e0e0e0; stroke-width: 3.4; stroke-linecap: round; stroke-linejoin: round; }
  .home { margin-right: 12px; }
</style>
<svg width="52" height="44"><path d="M2 5H50M2 22H50M2 39H50"/></svg>
<svg class="home" width="72" height="48"><path d="M3 22L34 4Q36 3 38 4L69 22M15 28V40Q15 43 19 43H53Q57 43 57 40V28"/></svg>
<svg width="54" height="48"><path d="M3 11H46Q51 11 51 16V37Q51 42 46 42H10M3 11L14 4V11Z"/></svg>
`);

/* ---------- text scaled horizontally to a given width ---------- */
customElements.define('fit-text', class extends HTMLElement {
  constructor() {
    super();
    this.attachShadow({ mode: 'open' });
    this.shadowRoot.innerHTML = `
<style>
  :host { display: inline-block; flex: none; white-space: nowrap; line-height: 1; vertical-align: middle; }
  span { display: inline-block; transform-origin: 0 50%; }
</style>
<span><slot></slot></span>`;
  }

  connectedCallback() {
    const width = +this.getAttribute('w');
    const span = this.shadowRoot.querySelector('span');
    this.style.fontSize = this.getAttribute('size') + 'px';
    this.style.fontWeight = this.getAttribute('weight') || 400;
    this.style.height = '1em';
    this.style.width = width + 'px';
    span.style.transform = `scaleX(${width / span.getBoundingClientRect().width})`;
  }
});
</script>
</body>
</html>
